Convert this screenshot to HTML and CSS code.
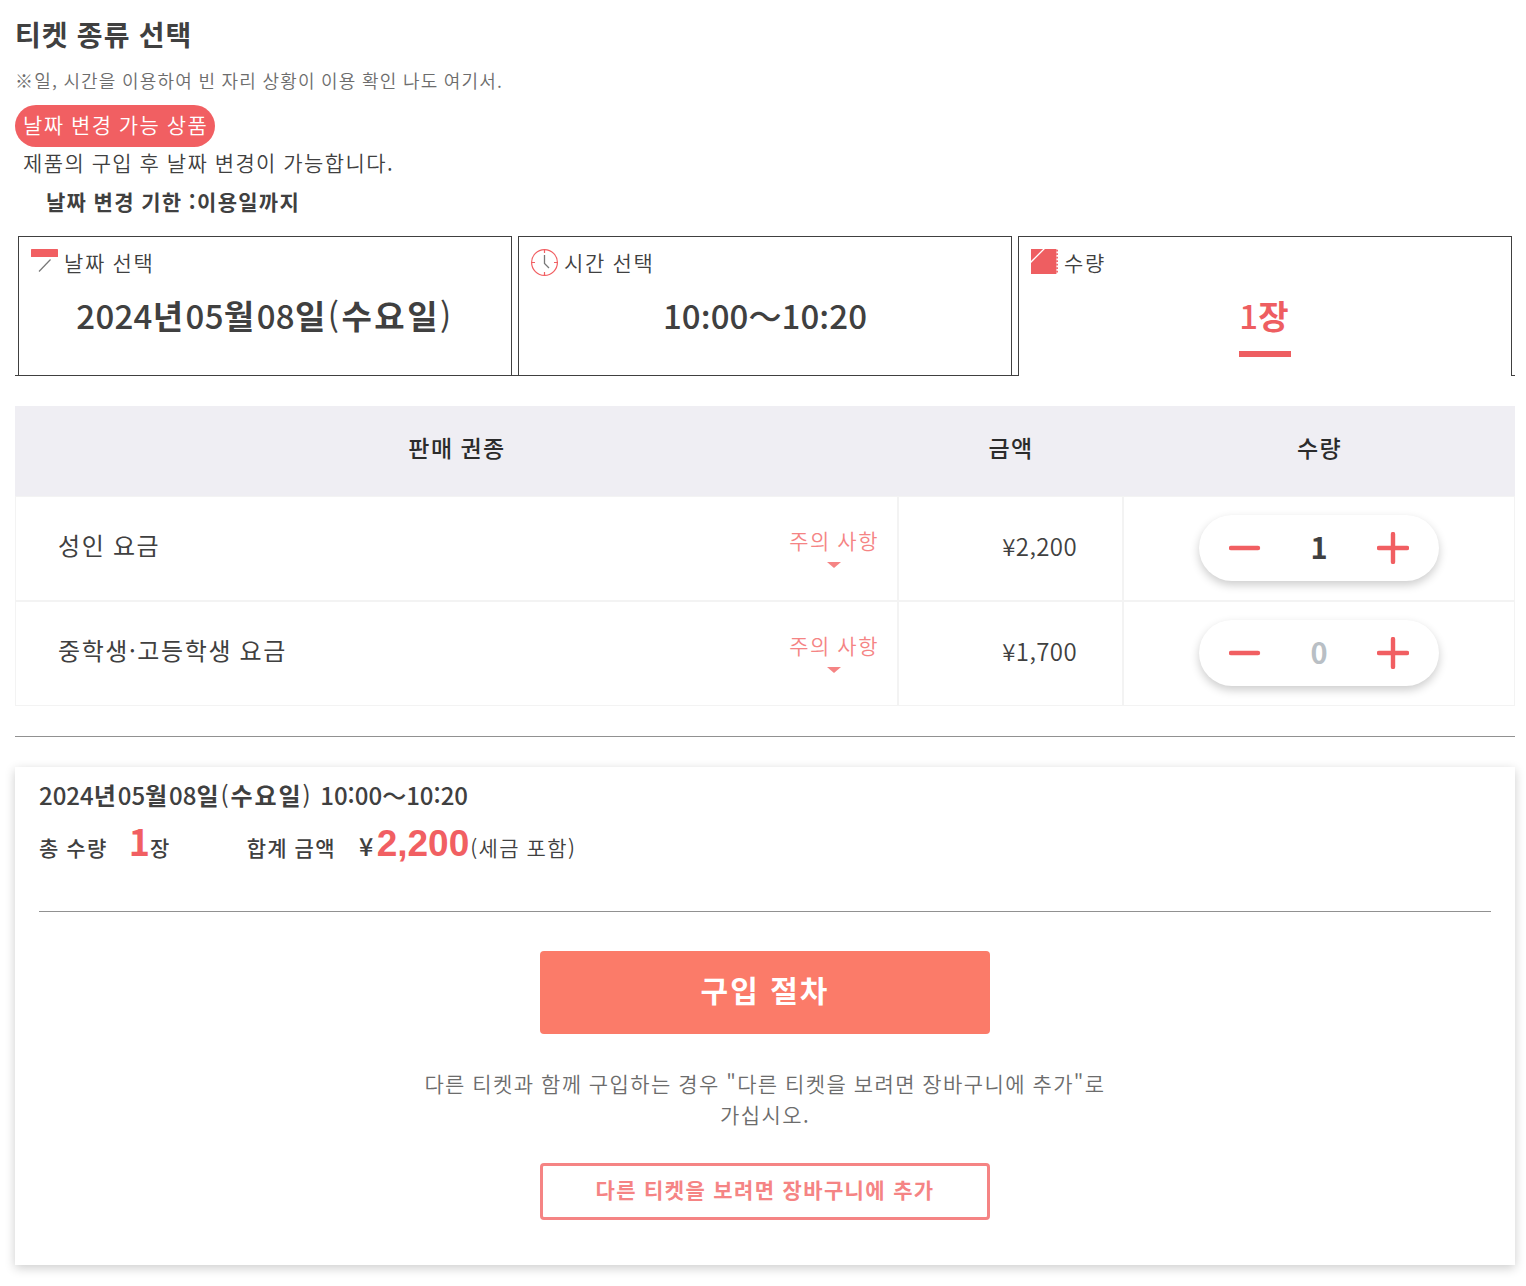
FILE: index.html
```html
<!DOCTYPE html>
<html lang="ko">

<head>
    <meta charset="UTF-8">
    <meta name="viewport" content="width=device-width, initial-scale=1.0">
    <title>티켓 종류 선택</title>
    <link rel="stylesheet" href="styles.css">
</head>

<body>
    <div class="container">
        <h1>티켓 종류 선택</h1>
        <p class="note">※일, 시간을 이용하여 빈 자리 상황이 이용 확인 나도 여기서.</p>
        <span class="badge">날짜 변경 가능 상품</span>
        <p class="change-text">제품의 구입 후 날짜 변경이 가능합니다.</p>
        <p class="change-limit">날짜 변경 기한 :이용일까지</p>

        <!-- Steps -->
        <div class="tabs">
            <div class="tab">
                <div class="tab-label">
                    <svg class="icon" viewBox="0 0 28 28">
                        <rect x="0" y="0" width="27" height="8" rx="0.6" fill="#f15f62" />
                        <path d="M19.5 10.5L8 22.5" stroke="#777" stroke-width="1.2" />
                    </svg>
                    <span>날짜 선택</span>
                </div>
                <div class="tab-value date"><span class="num">2024</span>년<span class="num">05</span>월<span class="num">08</span>일<span class="paren">(</span>수요일<span class="paren">)</span></div>
            </div>
            <div class="tab">
                <div class="tab-label">
                    <svg class="icon" viewBox="0 0 28 28" fill="none">
                        <circle cx="13.5" cy="13.5" r="12.9" stroke="#f15f62" stroke-width="1.2" />
                        <path d="M13.5 0.5V4M13.5 23V26.5M0.5 13.5H4M23 13.5H26.5" stroke="#f15f62" stroke-width="1.2" />
                        <path d="M13.5 6V14.5L18 19" stroke="#777" stroke-width="1.3" />
                    </svg>
                    <span>시간 선택</span>
                </div>
                <div class="tab-value time"><span class="num">10:00～10:20</span></div>
            </div>
            <div class="tab active">
                <div class="tab-label">
                    <svg class="icon" viewBox="0 0 28 28">
                        <path d="M0 0H25.4V25H0Z" fill="#ee5e61" />
                        <path d="M26.1 0.8V25" stroke="#ee5e61" stroke-width="1.6" stroke-dasharray="1.8 1.7" />
                        <path d="M-0.5 13.5L13.5 -0.5" stroke="#fff" stroke-width="1.3" />
                    </svg>
                    <span>수량</span>
                </div>
                <div class="tab-value"><span class="count"><span class="num">1</span>장</span></div>
            </div>
        </div>

        <!-- Ticket list -->
        <div class="tickets">
            <div class="row head">
                <div class="cell">판매 권종</div>
                <div class="cell">금액</div>
                <div class="cell">수량</div>
            </div>
            <div class="row">
                <div class="cell name">
                    <span>성인 요금</span>
                    <a class="notice">주의 사항</a>
                </div>
                <div class="cell price">¥2,200</div>
                <div class="cell">
                    <div class="counter">
                        <svg class="sign" viewBox="0 0 32 32"><path d="M2 16H29" /></svg>
                        <span class="qty">1</span>
                        <svg class="sign" viewBox="0 0 32 32"><path d="M2 16H30M16 2V30" /></svg>
                    </div>
                </div>
            </div>
            <div class="row">
                <div class="cell name">
                    <span>중학생·고등학생 요금</span>
                    <a class="notice">주의 사항</a>
                </div>
                <div class="cell price">¥1,700</div>
                <div class="cell">
                    <div class="counter">
                        <svg class="sign" viewBox="0 0 32 32"><path d="M2 16H29" /></svg>
                        <span class="qty zero">0</span>
                        <svg class="sign" viewBox="0 0 32 32"><path d="M2 16H30M16 2V30" /></svg>
                    </div>
                </div>
            </div>
        </div>

        <hr>

        <!-- Summary -->
        <div class="summary">
            <div class="summary-date"><span class="num">2024</span>년<span class="num">05</span>월<span class="num">08</span>일<span class="paren">(</span>수요일<span class="paren">)</span> <span class="num">10:00～10:20</span></div>
            <div class="total">
                <span class="total-label">총 수량</span>
                <span class="big">1</span>
                <span class="unit">장</span>
                <span class="total-label amount">합계 금액</span>
                <span class="yen">¥</span>
                <span class="big sum">2,200</span>
                <span class="tax">(세금 포함)</span>
            </div>
            <hr>
            <button type="button" class="button">구입 절차</button>
            <p class="cart-text">다른 티켓과 함께 구입하는 경우 "다른 티켓을 보려면 장바구니에 추가"로 가십시오.</p>
            <button type="button" class="button outline">다른 티켓을 보려면 장바구니에 추가</button>
        </div>
    </div>
</body>

</html>
```
FILE: styles.css
```css
* {
    box-sizing: border-box;
}

body {
    margin: 0;
    font-family: "Noto Sans CJK KR", sans-serif;
    font-size: 21px;
    font-weight: 350;
    letter-spacing: 1.4px;
    word-spacing: -0.8px;
    color: #404040;
    background-color: #fff;
}

h1,
p {
    margin: 0;
}

hr {
    margin: 0;
    border: none;
    border-top: 1px solid #919191;
}

.container {
    width: 1500px;
    margin-left: 15px;
    padding: 15px 0 21px;
}

h1 {
    font-size: 28px;
    font-weight: 700;
    line-height: 38px;
    letter-spacing: 1.1px;
}

.note {
    margin-top: 11px;
    font-size: 18px;
    line-height: 32px;
    letter-spacing: 1.18px;
    color: #6c6c6c;
}

.badge {
    display: block;
    width: 200px;
    height: 42px;
    margin-top: 9px;
    padding-left: 8px;
    border-radius: 21px;
    background-color: #f15f62;
    color: #fff;
    line-height: 39px;
    white-space: nowrap;
}

.change-text {
    padding-left: 8px;
    line-height: 31px;
}

.change-limit {
    margin-top: 8px;
    padding-left: 31px;
    font-weight: 700;
    line-height: 31px;
    letter-spacing: 1.3px;
}

/* Steps */
.tabs {
    display: flex;
    height: 140px;
    margin-top: 19px;
    border-bottom: 1px solid #404040;
}

.tab {
    flex: 1;
    margin: 0 3px;
    padding: 12px;
    border: 1px solid #404040;
    border-bottom: none;
}

.tab.active {
    margin-bottom: -1px;
    background-color: #fff;
}

.tab-label {
    display: flex;
    height: 28px;
    line-height: 27px;
    letter-spacing: 1.6px;
}

.icon {
    width: 28px;
    height: 28px;
    margin-right: 5px;
}

.tab-value {
    margin-top: 11px;
    font-size: 33px;
    font-weight: 700;
    line-height: 54px;
    letter-spacing: 2.5px;
    text-align: center;
}

.num {
    font-weight: 500;
    letter-spacing: 0.1px;
}

.date .num {
    letter-spacing: 0.3px;
}

.paren {
    font-weight: 400;
}

.count {
    display: inline-block;
    height: 69px;
    border-bottom: 6px solid #ee5e61;
    color: #ee5e61;
    letter-spacing: 2px;
}

/* Ticket list */
.tickets {
    margin: 30px 0;
}

.row {
    display: grid;
    grid-template-columns: 883px 225px 392px;
    height: 105px;
}

.cell {
    display: flex;
    align-items: center;
    justify-content: center;
    padding-bottom: 2px;
    border: 1px solid #f3f3f3;
    font-size: 24px;
}

.head {
    height: 90px;
    background-color: #efeef3;
}

.head .cell {
    padding: 0 0 8px 1px;
    border: none;
    font-size: 23px;
    font-weight: 500;
    color: #2b2b2b;
}

.name {
    justify-content: space-between;
    padding: 0 18px 8px 42px;
    font-weight: 400;
    letter-spacing: 1.6px;
}

.notice {
    display: flex;
    flex-direction: column;
    align-items: center;
    padding-top: 2px;
    font-size: 21px;
    font-weight: 350;
    line-height: 32px;
    letter-spacing: 1.5px;
    color: #f58484;
}

.notice::after {
    content: "";
    margin-top: 6px;
    border: 7px solid transparent;
    border-top: 6px solid #f58484;
    border-bottom: none;
}

.price {
    justify-content: flex-end;
    padding: 0 45px 6px 0;
    letter-spacing: 0.4px;
}

.counter {
    display: flex;
    align-items: center;
    justify-content: space-between;
    width: 240px;
    height: 66px;
    padding: 0 30px;
    border-radius: 33px;
    background-color: #fff;
    box-shadow: 0 4px 10px rgba(0, 0, 0, 0.2);
}

.sign {
    width: 32px;
    height: 32px;
    fill: none;
    stroke: #f15f62;
    stroke-width: 4.4;
    stroke-linecap: round;
}

.qty {
    padding-bottom: 4px;
    font-size: 29px;
    font-weight: 700;
    letter-spacing: 0;
}

.zero {
    color: #b9bfc5;
}

/* Summary */
.summary {
    height: 498px;
    margin-top: 30px;
    padding: 11px 24px;
    box-shadow: 0 3px 10px rgba(0, 0, 0, 0.2);
}

.summary-date {
    font-size: 24px;
    font-weight: 700;
    line-height: 34px;
    letter-spacing: 1.9px;
}

.summary-date .num {
    letter-spacing: 0;
}

.total {
    display: flex;
    align-items: baseline;
    height: 99px;
    line-height: 57px;
}

.total-label,
.unit,
.yen {
    font-weight: 500;
}

.total-label {
    margin-right: 21px;
}

.big {
    font-size: 36px;
    font-weight: 700;
    letter-spacing: 0;
    color: #f15f62;
}

.big.sum {
    margin: 0 1px 0 2px;
    font-family: "Liberation Sans", sans-serif;
    font-size: 37px;
}

.amount {
    margin: 0 23px 0 76px;
}

.yen {
    font-size: 25px;
}

.tax {
    font-weight: 350;
}

.button {
    display: block;
    width: 450px;
    height: 83px;
    margin: 39px auto 0;
    padding-bottom: 8px;
    border: none;
    border-radius: 4px;
    background-color: #fb7b69;
    color: #fff;
    font-family: inherit;
    font-size: 30px;
    font-weight: 700;
    letter-spacing: 2px;
}

.cart-text {
    width: 700px;
    margin: 34px auto 0;
    line-height: 31px;
    letter-spacing: 1.4px;
    text-align: center;
    color: #6c6c6c;
}

.button.outline {
    height: 57px;
    margin-top: 33px;
    padding-bottom: 6px;
    border: 3px solid #f58484;
    background-color: #fff;
    color: #f58484;
    font-size: 21px;
    letter-spacing: 1.35px;
}
```
